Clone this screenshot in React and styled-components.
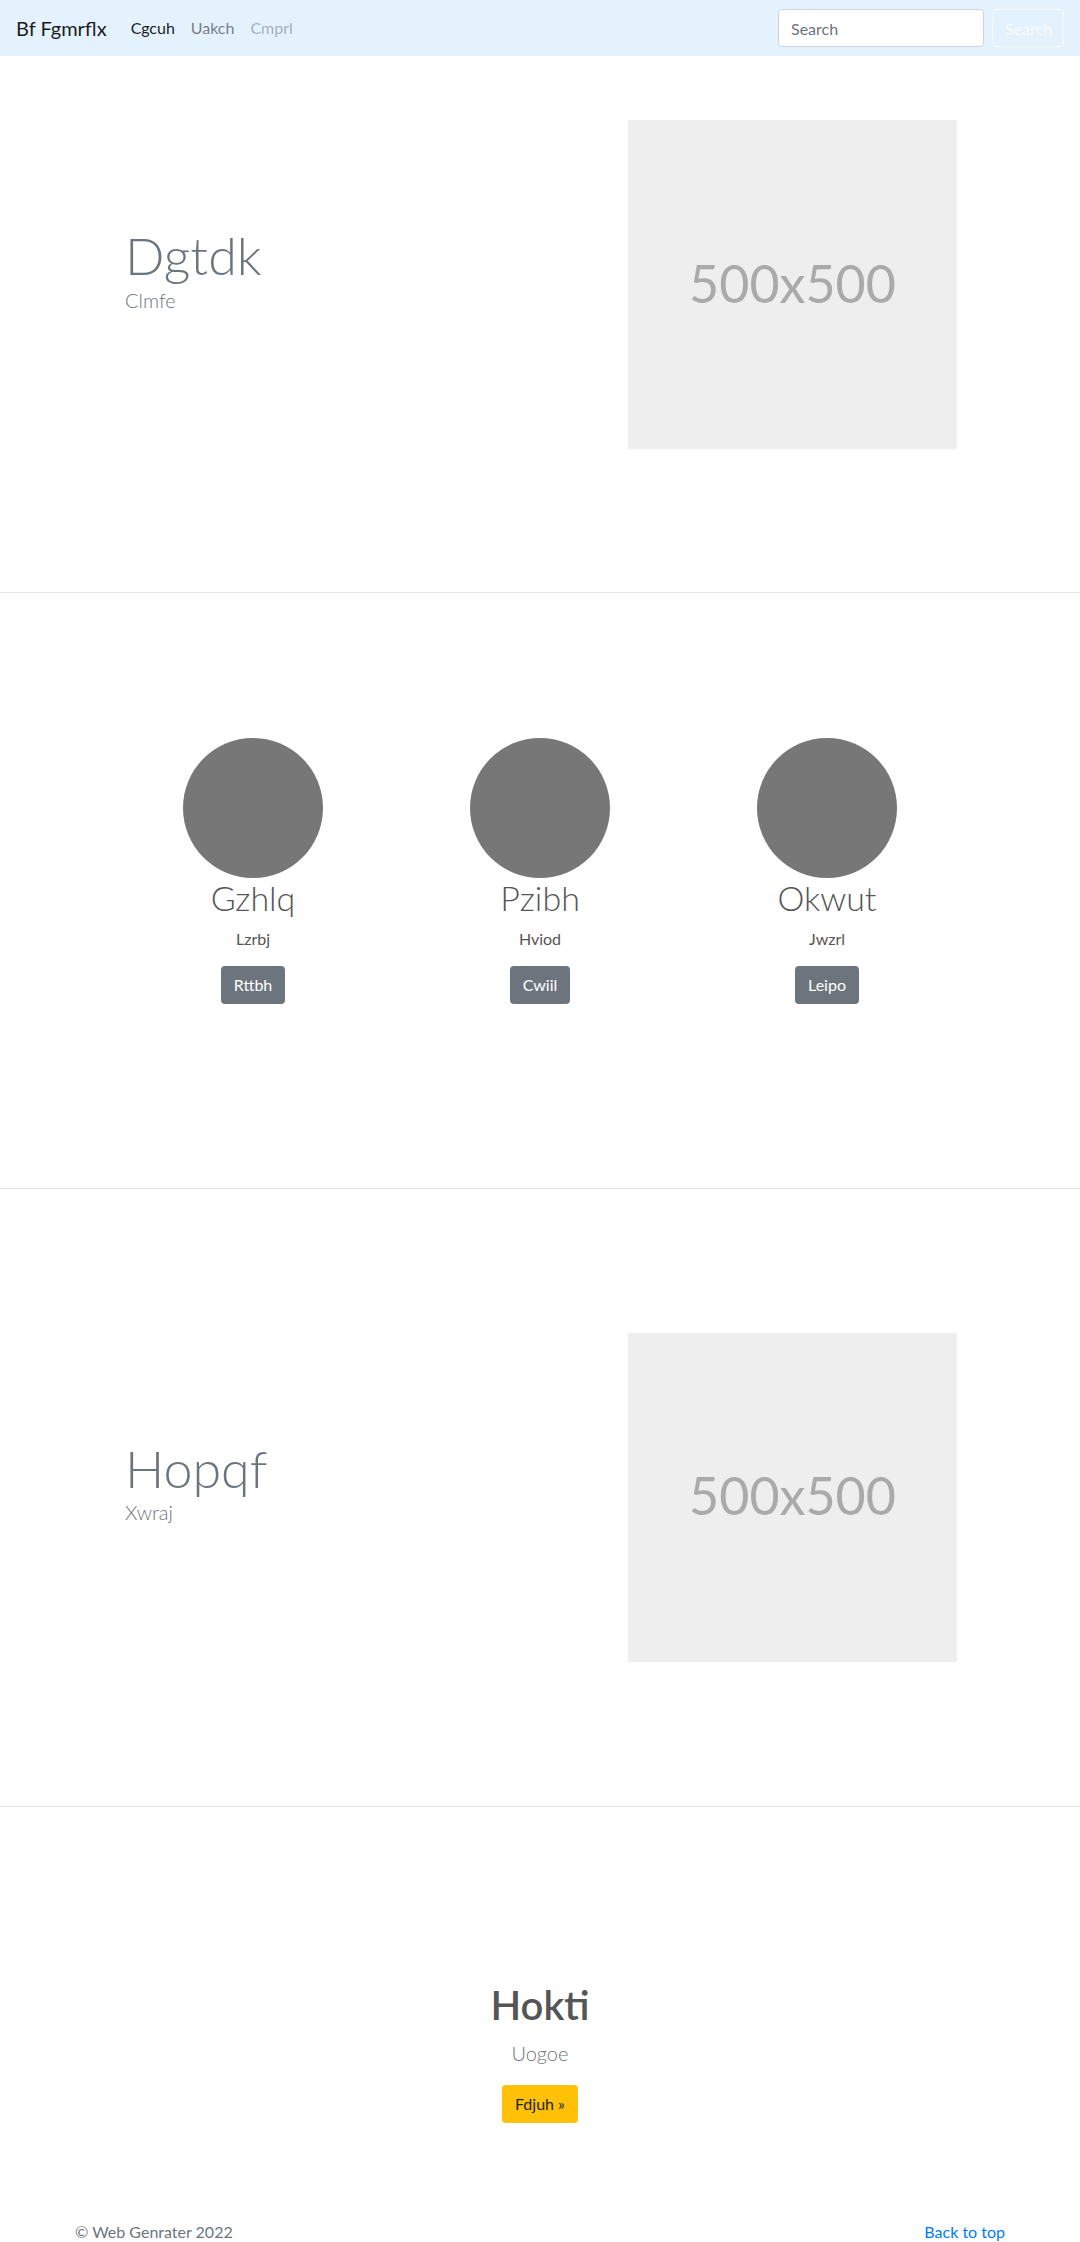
import styled, { createGlobalStyle } from 'styled-components'

const GlobalStyle = createGlobalStyle`
    body {
        margin: 0;
        font-family: "Segoe UI", Lato, "Liberation Sans", sans-serif;
        font-size: 16px;
        line-height: 1.5;
        color: #212529;
        background: #fff;
    }
    * {
        box-sizing: border-box;
    }
`

const members = [
    { name: 'Gzhlq', role: 'Lzrbj', action: 'Rttbh' },
    { name: 'Pzibh', role: 'Hviod', action: 'Cwiil' },
    { name: 'Okwut', role: 'Jwzrl', action: 'Leipo' },
]

const App = () => {
    return (
        <>
            <GlobalStyle />
            <Navbar>
                <Brand href="#">Bf Fgmrflx</Brand>
                <NavLinks>
                    <NavLink $state="active">Cgcuh</NavLink>
                    <NavLink>Uakch</NavLink>
                    <NavLink $state="disabled">Cmprl</NavLink>
                </NavLinks>
                <SearchForm>
                    <SearchInput placeholder="Search" />
                    <SearchButton type="button">Search</SearchButton>
                </SearchForm>
            </Navbar>

            <Hero $top="64px" $bottom="143px">
                <HeroInner>
                    <HeroText>
                        <HeroTitle>Dgtdk</HeroTitle>
                        <HeroLead>Clmfe</HeroLead>
                    </HeroText>
                    <Placeholder>500x500</Placeholder>
                </HeroInner>
            </Hero>

            <Team>
                <TeamGrid>
                    {members.map((m) => (
                        <Member key={m.name}>
                            <Avatar />
                            <MemberName>{m.name}</MemberName>
                            <MemberRole>{m.role}</MemberRole>
                            <Button $variant="secondary">{m.action}</Button>
                        </Member>
                    ))}
                </TeamGrid>
            </Team>

            <Hero $top="144px" $bottom="144px">
                <HeroInner>
                    <HeroText>
                        <HeroTitle>Hopqf</HeroTitle>
                        <HeroLead>Xwraj</HeroLead>
                    </HeroText>
                    <Placeholder>500x500</Placeholder>
                </HeroInner>
            </Hero>

            <Cta>
                <CtaTitle>Hokti</CtaTitle>
                <CtaLead>Uogoe</CtaLead>
                <Button $variant="warning">Fdjuh »</Button>
            </Cta>

            <Footer>
                <span>© Web Genrater 2022</span>
                <FooterLink href="#">Back to top</FooterLink>
            </Footer>
        </>
    )
}

const Navbar = styled.nav`
    display: flex;
    align-items: center;
    height: 56px;
    padding: 0 16px;
    background-color: #e3f2fd;
`

const Brand = styled.a`
    font-size: 20px;
    line-height: 30px;
    color: rgba(0, 0, 0, 0.9);
    text-decoration: none;
    margin-right: 16px;
`

const NavLinks = styled.div`
    display: flex;
`

const NavLink = styled.a`
    padding: 8px;
    font-size: 16px;
    color: ${(p) =>
        p.$state === 'active'
            ? 'rgba(0, 0, 0, 0.9)'
            : p.$state === 'disabled'
            ? 'rgba(0, 0, 0, 0.3)'
            : 'rgba(0, 0, 0, 0.5)'};
`

const SearchForm = styled.form`
    display: flex;
    align-items: center;
    gap: 8px;
    margin-left: auto;
`

const SearchInput = styled.input`
    width: 206px;
    height: 38px;
    padding: 6px 12px;
    font-family: inherit;
    font-size: 16px;
    color: #495057;
    background: #fff;
    border: 1px solid #ced4da;
    border-radius: 4px;
    outline: none;

    &::placeholder {
        color: #6c757d;
    }
`

const SearchButton = styled.button`
    width: 72px;
    height: 38px;
    padding: 6px 12px;
    font-family: inherit;
    font-size: 16px;
    color: #f8f9fa;
    background: transparent;
    border: 1px solid #f8f9fa;
    border-radius: 4px;
`

const Hero = styled.section`
    padding: ${(p) => p.$top} 0 ${(p) => p.$bottom};
    border-bottom: 1px solid #e3e3e3;
`

const HeroInner = styled.div`
    display: flex;
    align-items: center;
    justify-content: space-between;
    width: 834px;
    margin: 0 auto;
`

const HeroText = styled.div`
    padding-left: 2px;
`

const HeroTitle = styled.h1`
    margin: 0;
    font-size: 52px;
    font-weight: 300;
    line-height: 1.2;
    color: #6c757d;
`

const HeroLead = styled.p`
    margin: 0 0 32px;
    font-size: 20px;
    font-weight: 300;
    line-height: 1.3;
    color: #6c757d;
`

const Placeholder = styled.div`
    display: flex;
    align-items: center;
    justify-content: center;
    width: 329px;
    height: 329px;
    padding-bottom: 4px;
    background-color: #eee;
    color: #aaa;
    font-size: 52px;
`

const Team = styled.section`
    padding: 145px 0 184px;
    border-bottom: 1px solid #e3e3e3;
`

const TeamGrid = styled.div`
    display: grid;
    grid-template-columns: repeat(3, 287px);
    justify-content: center;
`

const Member = styled.div`
    display: flex;
    flex-direction: column;
    align-items: center;
    text-align: center;
`

const Avatar = styled.div`
    width: 140px;
    height: 140px;
    border-radius: 50%;
    background-color: #777;
`

const MemberName = styled.h2`
    margin: 0;
    font-size: 34px;
    font-weight: 300;
    line-height: 1.2;
    color: #555;
`

const MemberRole = styled.p`
    margin: 8px 0 15px;
    font-size: 16px;
    color: #555;
`

const Button = styled.button`
    padding: 6px 12px;
    height: 38px;
    font-family: inherit;
    font-size: 16px;
    line-height: 1.5;
    border: 1px solid transparent;
    border-radius: 4px;
    color: ${(p) => (p.$variant === 'warning' ? '#212529' : '#fff')};
    background-color: ${(p) => (p.$variant === 'warning' ? '#ffc107' : '#6c757d')};
`

const Cta = styled.section`
    display: flex;
    flex-direction: column;
    align-items: center;
    padding-top: 174px;
    text-align: center;
`

const CtaTitle = styled.h1`
    margin: 0;
    font-size: 40px;
    font-weight: 600;
    line-height: 1.2;
    color: #555;
`

const CtaLead = styled.p`
    margin: 12px 0 20px;
    font-size: 20px;
    font-weight: 300;
    line-height: 1.2;
    color: #6c757d;
`

const Footer = styled.footer`
    display: flex;
    justify-content: space-between;
    width: 930px;
    margin: 0 auto;
    padding: 97px 0 48px;
    font-size: 16px;
    color: #6c757d;
`

const FooterLink = styled.a`
    color: #007bff;
    text-decoration: none;
`

export default App
